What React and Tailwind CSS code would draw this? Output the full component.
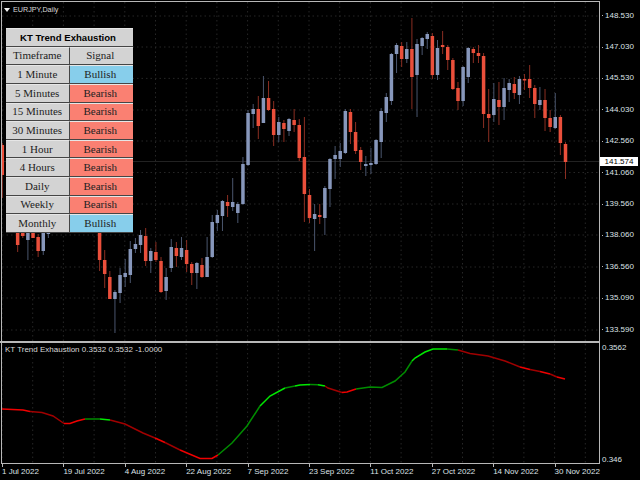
import React from "react";

const BULL = 1;
const BEAR = 0;
// [index, direction, wick top, body top, body bottom, wick bottom]
const candles = [
  [0,BEAR,143,145,175,198],[3,BEAR,220,225,245,252],[4,BEAR,220,225,236,238],[5,BULL,220,225,240,260],[6,BEAR,225,228,238,238],
  [7,BEAR,234,237,251,257],[8,BULL,228,233,251,255],[9,BULL,225,230,234,238],
  [19,BEAR,205,210,260,271],[20,BEAR,250,260,274,288],[21,BEAR,271,277,299,299],[22,BULL,290,292,299,333],[23,BULL,268,275,293,303],
  [24,BULL,259,273,277,287],[25,BULL,241,249,275,283],[26,BULL,238,244,249,253],[27,BULL,230,235,245,253],[28,BEAR,228,236,261,266],
  [29,BULL,248,251,261,273],[30,BEAR,242,252,260,262],[31,BEAR,257,261,292,293],[32,BULL,268,277,291,300],[33,BULL,239,247,268,272],
  [34,BEAR,242,248,256,267],[35,BULL,237,248,257,260],[36,BEAR,240,250,264,272],[37,BEAR,262,264,273,285],[38,BULL,262,263,273,289],
  [39,BEAR,258,265,277,278],[40,BULL,237,257,277,277],[41,BULL,215,222,257,258],[42,BULL,210,215,223,231],[43,BULL,200,201,216,231],
  [44,BEAR,195,202,206,217],[45,BULL,178,202,207,211],[46,BULL,202,204,213,223],[47,BULL,157,164,204,205],[48,BULL,110,113,165,166],
  [49,BULL,104,109,114,128],[50,BEAR,96,109,126,139],[51,BULL,76,98,123,123],[52,BEAR,81,98,110,111],[53,BEAR,101,109,135,146],
  [54,BULL,117,122,135,142],[55,BEAR,120,123,129,142],[56,BULL,118,119,131,136],[57,BEAR,109,120,125,132],[58,BEAR,119,125,158,161],
  [59,BEAR,117,157,194,222],[60,BEAR,189,195,218,223],[61,BULL,204,214,219,251],[62,BEAR,204,215,217,224],[63,BULL,186,188,218,235],
  [64,BULL,158,159,189,207],[65,BULL,146,155,159,179],[66,BULL,143,151,159,167],[67,BULL,109,111,153,154],[68,BEAR,109,112,132,144],
  [69,BEAR,122,132,151,154],[70,BEAR,147,150,162,170],[71,BULL,156,164,166,176],[72,BULL,148,163,165,174],[73,BULL,139,140,164,165],
  [74,BULL,108,111,142,158],[75,BULL,93,97,113,122],[76,BULL,53,54,101,105],[77,BULL,43,45,54,73],[78,BEAR,42,46,59,67],
  [79,BULL,42,49,59,63],[80,BEAR,18,49,77,109],[81,BULL,39,44,75,117],[82,BULL,37,38,46,55],[83,BULL,32,34,39,49],
  [84,BEAR,33,36,75,79],[85,BULL,40,48,75,80],[86,BEAR,31,45,47,54],[87,BEAR,45,47,60,70],[88,BEAR,58,60,89,90],
  [89,BEAR,82,88,101,110],[90,BULL,66,67,101,106],[91,BULL,47,48,77,83],[92,BEAR,47,49,53,63],[93,BEAR,45,53,56,63],
  [94,BEAR,53,56,114,128],[95,BEAR,89,114,118,142],[96,BULL,83,99,115,122],[97,BEAR,82,100,107,125],[98,BULL,78,88,107,120],
  [99,BULL,79,83,90,102],[100,BEAR,77,84,93,99],[101,BULL,76,79,95,104],[102,BEAR,74,79,80,90],[103,BEAR,65,79,88,98],
  [104,BEAR,85,88,104,118],[105,BULL,87,100,105,110],[106,BEAR,89,100,118,131],[107,BEAR,110,118,127,132],[108,BULL,93,117,128,129],
  [109,BEAR,115,117,143,155],[110,BEAR,142,144,162,179],
];

const RED = "#f00000";
const DARKRED = "#a00000";
const GREEN = "#00e800";
const DARKGREEN = "#008c00";
const lineSections = [
  [RED, "2,409 23,410 30,411.5"],
  [DARKRED, "30,411.5 42,412.5 53,416 64,423.5"],
  [RED, "64,423.5 70,423.5 77,421 85,419"],
  [DARKGREEN, "85,419 100,419"],
  [GREEN, "100,419 110,420"],
  [DARKRED, "110,420 125,424 143,433 155,438"],
  [RED, "155,438 165,442.5"],
  [DARKRED, "165,442.5 180,450"],
  [RED, "180,450 200,458.5 212,458.5 218,455"],
  [DARKGREEN, "218,455 232,443 247,426 260,406"],
  [GREEN, "260,406 270,396 285,388"],
  [DARKGREEN, "285,388 295,386"],
  [GREEN, "295,386 300,385 310,384.5"],
  [DARKGREEN, "310,384.5 318,384.7"],
  [GREEN, "318,384.7 325,386"],
  [DARKRED, "325,386 328,388 342,392.5"],
  [RED, "342,392.5 347,392 356,389"],
  [DARKGREEN, "356,389 370,387 382,387.5 395,381 405,372 412,361"],
  [GREEN, "412,361 415,358 425,352 433,349 447,349"],
  [DARKGREEN, "447,349 458,350"],
  [DARKRED, "458,350 470,353.5 488,356 505,361 520,367"],
  [RED, "520,367 530,369.5"],
  [DARKRED, "530,369.5 540,371.5"],
  [RED, "540,371.5 550,374"],
  [DARKRED, "550,374 557,377"],
  [RED, "557,377 565,379"],
];

const gridX = Array.from({ length: 20 }, (_, k) => 2 + 30.7 * k);
const priceY = [16, 47, 78.4, 110, 141, 172.5, 204, 235, 267, 298, 330];
const prices = ["148.530","147.030","145.530","144.030","142.560","141.060","139.560","138.060","136.560","135.090","133.590"];
const dates = ["1 Jul 2022","19 Jul 2022","4 Aug 2022","22 Aug 2022","7 Sep 2022","23 Sep 2022","11 Oct 2022","27 Oct 2022","14 Nov 2022","30 Nov 2022"];
const rows = [
  ["1 Minute", "Bullish"],["5 Minutes", "Bearish"],["15 Minutes", "Bearish"],["30 Minutes", "Bearish"],["1 Hour", "Bearish"],
  ["4 Hours", "Bearish"],["Daily", "Bearish"],["Weekly", "Bearish"],["Monthly", "Bullish"],
];

function PriceChart() {
  return (
    <svg className="block w-[597px] h-[339px] blur-[0.35px]" viewBox="2 2 597 339">
      {gridX.map((x) => (
        <line key={x} x1={x} x2={x} y1="2" y2="341" stroke="#262626" strokeWidth="1" strokeDasharray="1.5 3" />
      ))}
      {priceY.map((y) => (
        <line key={y} x1="2" x2="599" y1={y} y2={y} stroke="#262626" strokeWidth="1" strokeDasharray="1.5 3" />
      ))}
      <line x1="2" x2="599" y1="161.5" y2="161.5" stroke="#222222" strokeWidth="1" />
      {candles.map(([n, dir, wt, bt, bb, wb]) => {
        const x = 2.3 + 5.12 * n;
        return (
          <g key={n}>
            <rect x={x - 0.5} y={wt} width="1" height={wb - wt} fill={dir === BULL ? "#4a556d" : "#8a2e22"} />
            <rect x={x - 1.75} y={bt} width="3.5" height={Math.max(bb - bt, 1.5)} fill={dir === BULL ? "#8797bb" : "#ea4f3b"} />
          </g>
        );
      })}
    </svg>
  );
}

function IndicatorChart() {
  return (
    <svg className="block w-[597px] h-[120px] blur-[0.3px]" viewBox="2 343 597 120">
      {gridX.map((x) => (
        <line key={x} x1={x} x2={x} y1="344" y2="464" stroke="#262626" strokeWidth="1" strokeDasharray="1.5 3" />
      ))}
      {lineSections.map(([color, points]) => (
        <polyline key={points} points={points} fill="none" stroke={color} strokeWidth="1.5" />
      ))}
    </svg>
  );
}

function TrendTable() {
  const cell = "flex items-center justify-center h-[18.63px] border-t border-t-[#e6e6e6] border-b border-b-[#454545]";
  return (
    <div className="absolute left-[4px] top-[26px] w-[127px] grid grid-cols-2 text-[11px] text-[#222222] font-['Liberation_Serif',serif]">
      <div className={`col-span-2 pr-[3px] bg-[#d3d3d3] font-['Liberation_Sans',sans-serif] font-bold text-[9.6px] text-black ${cell}`}>KT Trend Exhaustion</div>
      <div className={`bg-[#d3d3d3] border-r border-r-[#454545] ${cell}`}>Timeframe</div>
      <div className={`bg-[#d3d3d3] pr-[2px] ${cell}`}>Signal</div>
      {rows.map(([frame, signal]) => (
        <React.Fragment key={frame}>
          <div className={`bg-[#d3d3d3] border-r border-r-[#454545] ${cell}`}>{frame}</div>
          <div className={`pr-[2px] ${signal === "Bullish" ? "bg-[#87ceeb]" : "bg-[#fa8072]"} ${cell}`}>{signal}</div>
        </React.Fragment>
      ))}
    </div>
  );
}

export default function App() {
  return (
    <div className="w-[640px] h-[480px] bg-black overflow-hidden flex flex-col text-[8px] leading-none text-[#dde0e6] font-['Liberation_Sans',sans-serif]">
      <div className="flex h-[341px]">
        <div className="relative ml-[1px] mt-[1px] w-[599px] h-[340px] border-t border-l border-r border-[#b8b8b8]">
          <PriceChart />
          <div className="absolute left-[2px] top-[4px] flex items-center gap-[3px] text-[7.2px] text-[#d8d8d8]">
            <svg className="w-[6px] h-[4px]" viewBox="0 0 6 4"><polygon points="0,0 6,0 3,4" fill="#f0f0f0" /></svg>
            <span>EURJPY,Daily</span>
          </div>
          <TrendTable />
        </div>
        <div className="relative h-[341px] pl-[2px]">
          {prices.map((p) => (
            <div key={p} className="h-[31.4px] flex items-center gap-[2px]">
              <span className="w-[1px] h-[1px] bg-[#b8b8b8]" />
              <span>{p}</span>
            </div>
          ))}
          <div className="absolute left-[0px] top-[157px] w-[38px] h-[9px] bg-white text-black flex items-center justify-center">141.574</div>
        </div>
      </div>
      <div className="h-[2px] w-[600px] bg-[#b8b8b8]" />
      <div className="flex h-[121px]">
        <div className="relative ml-[1px] w-[599px] border-l border-r border-b border-[#b8b8b8]">
          <IndicatorChart />
          <div className="absolute left-[3px] top-[3px] text-[#d8d8d8]">KT Trend Exhaustion 0.3532 0.3532 -1.0000</div>
        </div>
        <div className="pl-[2px] pt-[1px] flex flex-col justify-between">
          <span>0.3562</span>
          <span>0.346</span>
        </div>
      </div>
      <div className="flex pl-[2px] pt-[3px]">
        {dates.map((d) => (
          <div key={d} className="w-[61.4px] shrink-0 whitespace-nowrap relative">
            <span className="absolute left-0 -top-[3px] w-[1px] h-[3px] bg-[#b8b8b8]" />
            <span className="block pt-[1px]">{d}</span>
          </div>
        ))}
      </div>
    </div>
  );
}
